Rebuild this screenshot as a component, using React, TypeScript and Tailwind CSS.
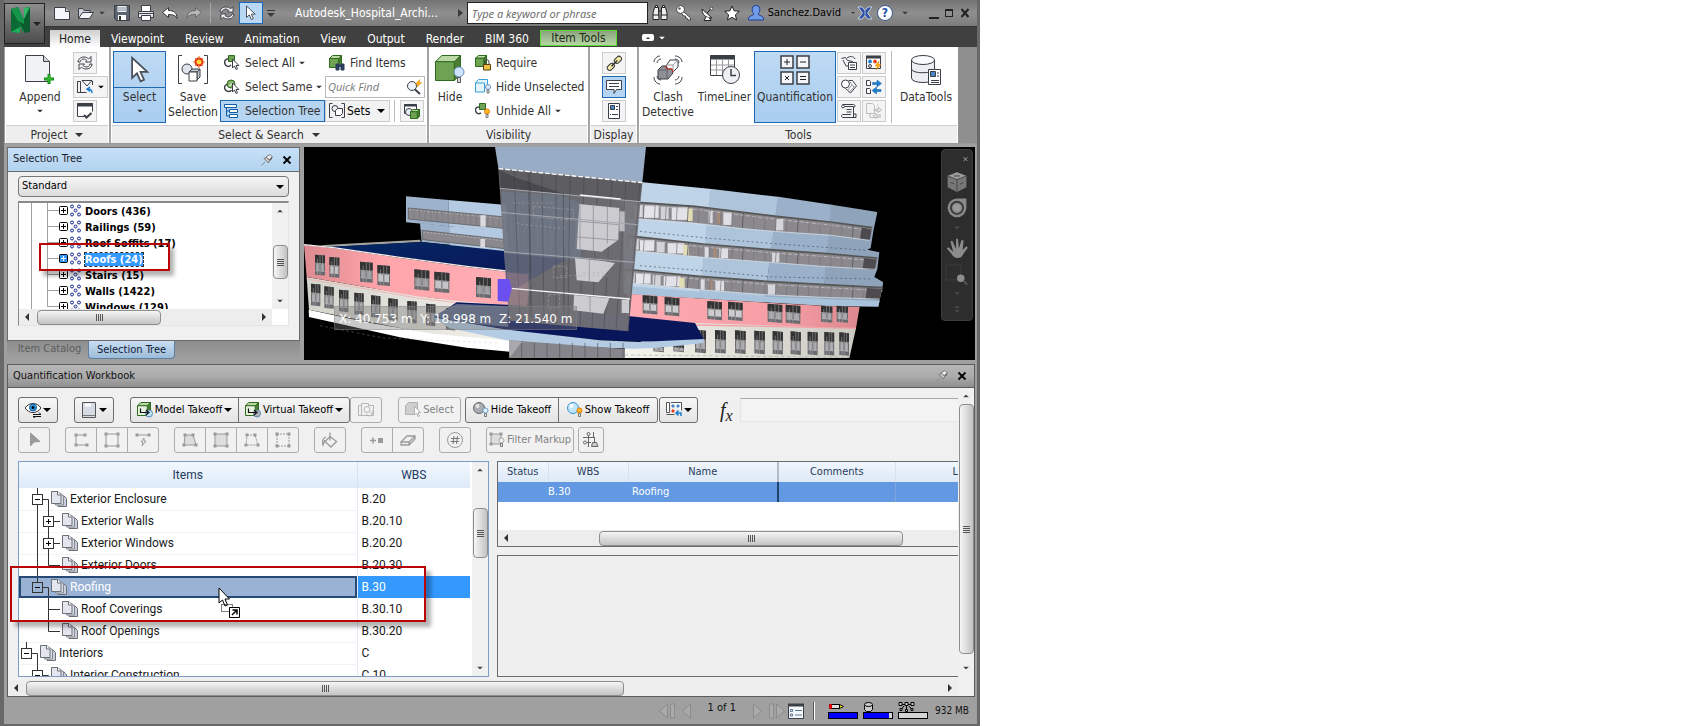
import type { ReactNode } from "react";

const ink = "#3b3f47";

/* ---------- shared bits ---------- */

function Caret({ className = "" }: { className?: string }) {
  return (
    <svg viewBox="0 0 8 4" className={`h-1 w-2 shrink-0 ${className}`}>
      <path d="M0 0h8L4 4z" fill="currentColor" />
    </svg>
  );
}

function Icon({
  size = "h-4 w-4",
  box = "0 0 16 16",
  children,
}: {
  size?: string;
  box?: string;
  children: ReactNode;
}) {
  return (
    <svg
      viewBox={box}
      className={`shrink-0 ${size}`}
      fill="none"
      stroke={ink}
      strokeWidth="1"
    >
      {children}
    </svg>
  );
}

function VScroll({ top, thumb }: { top: string; thumb: string }) {
  return (
    <div className="flex w-4 shrink-0 flex-col items-center bg-[#f0f0f0] py-1.5 text-[#444]">
      <Caret className="scale-75 rotate-180" />
      <div className={`w-full ${top}`} />
      <div
        className={`flex w-[15px] flex-col items-center justify-center gap-px rounded-sm border border-[#8e8e8e] bg-gradient-to-r from-[#f6f6f6] via-[#dcdcdc] to-[#c2c2c4] ${thumb}`}
      >
        {[0, 1, 2, 3].map((i) => (
          <span key={i} className="h-px w-[7px] bg-[#555]" />
        ))}
      </div>
      <div className="flex-1" />
      <Caret className="scale-75" />
    </div>
  );
}

function HScroll({
  left,
  thumb,
  end = true,
}: {
  left: string;
  thumb: string;
  end?: boolean;
}) {
  return (
    <div className="flex h-4 shrink-0 items-center bg-[#ededed] text-[#333]">
      <svg viewBox="0 0 4 8" className="mx-1.5 h-2 w-1 shrink-0">
        <path d="M4 0v8L0 4z" fill="currentColor" />
      </svg>
      <div className={`shrink-0 ${left}`} />
      <div
        className={`flex h-[15px] items-center justify-center gap-px rounded-sm border border-[#8e8e8e] bg-gradient-to-b from-[#f6f6f6] via-[#dcdcdc] to-[#c4c4c6] ${thumb}`}
      >
        {[0, 1, 2, 3].map((i) => (
          <span key={i} className="h-[7px] w-px bg-[#555]" />
        ))}
      </div>
      <div className="flex-1" />
      {end && (
        <svg viewBox="0 0 4 8" className="mx-1.5 h-2 w-1 shrink-0">
          <path d="M0 0v8l4-4z" fill="currentColor" />
        </svg>
      )}
    </div>
  );
}

function PinClose() {
  return (
    <div className="flex items-center gap-2">
      <button aria-label="Pin" className="h-3 w-3">
        <Icon size="h-3 w-3" box="0 0 12 12">
          <path d="M.5 11.500L4 8" stroke="#888" />
          <path d="M3 4.500l4.500 4.500 1-2.500-3-3z" stroke="#777" fill="#ccc" />
          <path d="M5 3l4-2.500 2.500 2.500L9 6.500z" stroke="#777" fill="#efefef" />
          <path d="M8 5.500l3-3v2.500L9 6.500z" fill="#666" stroke="none" />
        </Icon>
      </button>
      <button aria-label="Close" className="h-3 w-3">
        <svg viewBox="0 0 12 12" className="h-3 w-3">
          <path d="M2.500 2.500l7 7M9.500 2.500l-7 7" stroke="#000" strokeWidth="1.800" />
        </svg>
      </button>
    </div>
  );
}

/* ---------- icon drawings ---------- */

const arrowPath = "M2 1v11.500l2.800-2.600 2 4.600 2-.9-2-4.500h3.900z";

function CursorIcon({ size = "h-4 w-4" }: { size?: string }) {
  return (
    <svg viewBox="0 0 13 16" className={`shrink-0 ${size}`}>
      <path d={arrowPath} fill="#fff" stroke="#4a4f58" />
    </svg>
  );
}

function Cube({ x = 0, y = 0, s = 12, c = "#6fa353", l = "#b9d8a4", o = "#2e6b1e" }) {
  const d = s * 0.25;
  return (
    <g stroke={o} strokeLinejoin="round">
      <path d={`M${x} ${y + d}l${d} ${-d}h${s - d}l${-d} ${d}z`} fill={l} />
      <path d={`M${x + s - d} ${y + d}l${d} ${-d}v${s - d}l${-d} ${d}z`} fill="#4b7d35" />
      <path d={`M${x} ${y + d}h${s - d}v${s - d}h${-(s - d)}z`} fill={c} />
    </g>
  );
}

function Bulb({ x, y, c = "#ffb629", o = "#e07b00" }: { x: number; y: number; c?: string; o?: string }) {
  return (
    <g>
      <circle cx={x} cy={y} r="2.500" fill={c} stroke={o} />
      <path d={`M${x - 1} ${y + 3}h2v3h-2z`} fill="#eee" stroke="#777" />
    </g>
  );
}

function RefreshIcon({ c = ink }: { c?: string }) {
  return (
    <Icon>
      <path
        d="M1 7c0-3 3-5 6-5 2 0 3.500.8 4.500 2L14 1.500V7H8.500L10 5.500C9 4.500 8 4 7 4 5 4 3.500 5 3 7z"
        fill="#fff"
        stroke={c}
      />
      <path
        d="M15 9c0 3-3 5-6 5-2 0-3.500-.8-4.500-2L2 14.500V9h5.500L6 10.500c1 1 2 1.500 3 1.500 2 0 3.500-1 4-3z"
        fill="#fff"
        stroke={c}
      />
    </Icon>
  );
}

function PagesIcon() {
  return (
    <svg viewBox="0 0 16 16" className="h-4 w-4 shrink-0">
      <path d="M9 4.500h3.500l3 3v8H7V12z" fill="#c9cedb" stroke="#6c7078" />
      <path d="M6.500 2.500h3.500l2.500 2.500v9H4.500V11z" fill="#d8dce6" stroke="#85898f" />
      <path d="M.5.500h6.500l3 3v9H.5z" fill="#e3e6ee" stroke="#6c7078" />
      <path d="M6.500.500v3.500H10" fill="#fff" stroke="#6c7078" />
    </svg>
  );
}

/* ---------- title bar ---------- */

function TitleBar() {
  return (
    <div className="flex h-[26px] items-center bg-gradient-to-b from-[#737373] via-[#8f8f8f] to-[#7b7b7b] pl-[46px] text-[#3a3a3a]">
      <div className="flex items-center gap-2 pl-1">
        <button aria-label="New">
          <Icon>
            <path d="M.5 2.500h11l4 4v8H.5z" fill="#f6f7fa" />
            <path d="M11.500 2.500v4h4" fill="#cfd5df" />
          </Icon>
        </button>
        <button aria-label="Open">
          <Icon>
            <path d="M.5 13.500v-10h4l1.500 2h6v2" fill="#cfd4dc" />
            <path d="M.5 13.500l4-6h11l-4 6z" fill="#f2f4f7" />
          </Icon>
        </button>
        <Caret className="-mx-1 scale-75" />
        <button aria-label="Save" className="ml-1">
          <Icon>
            <path d="M.5.500h15v15H2.500l-2-2z" fill="#5b6370" />
            <path d="M3.500 1h9v6h-9z" fill="#e9edf3" stroke="none" />
            <path d="M4 3h8M4 5h8" stroke="#8a93a0" />
            <path d="M4 10h8v5H4z" fill="#fff" stroke="none" />
            <path d="M6 11v4" stroke="#333" strokeWidth="2" />
          </Icon>
        </button>
        <button aria-label="Print">
          <Icon>
            <path d="M3.500 6V.500h9V6" fill="#fff" />
            <path d="M.5 6.500h15v6H.5z" fill="#e1e4ea" />
            <path d="M1 8.500h14" stroke="#444" />
            <path d="M3.500 10.500h9v5h-9z" fill="#fff" />
          </Icon>
        </button>
        <button aria-label="Undo">
          <Icon>
            <path
              d="M.5 7.500l6-5v3c5 0 8.500 2 8.500 8-1-2.500-3.500-4-8.500-4v3z"
              fill="#fff"
              stroke="#333"
            />
          </Icon>
        </button>
        <button aria-label="Redo">
          <Icon>
            <path
              d="M15.500 7.500l-6-5v3c-5 0-8.500 2-8.500 8 1-2.500 3.500-4 8.500-4v3z"
              fill="#b5b5b5"
              stroke="#666"
            />
          </Icon>
        </button>
        <span className="h-5 w-px bg-[#a8a8a8]" />
        <button aria-label="Refresh">
          <RefreshIcon />
        </button>
      </div>
      <button
        aria-label="Select"
        className="ml-1 flex h-[22px] w-6 items-center justify-center border border-[#1a66b8] bg-[#b9d8f3]"
      >
        <CursorIcon />
      </button>
      <button aria-label="Customize" className="ml-1 flex w-2 flex-col items-center gap-0.5">
        <span className="h-px w-2 bg-[#333]" />
        <Caret />
      </button>
      <span className="ml-5 min-w-0 flex-1 truncate text-[12px] text-white">
        Autodesk_Hospital_Archi...
      </span>
      <svg viewBox="0 0 5 8" className="mr-1 h-2 w-[5px] shrink-0">
        <path d="M0 0v8l5-4z" fill="#3a3a3a" />
      </svg>
      <input
        type="text"
        aria-label="Search help"
        placeholder="Type a keyword or phrase"
        className="h-[22px] w-[181px] border border-[#222] bg-white px-1 font-['Open_Sans',sans-serif] text-[11px] italic placeholder:text-[#666]"
      />
      <div className="ml-1 flex items-center gap-2">
        <button aria-label="Search">
          <Icon>
            <path d="M2.500 2.500h4v3l.5 9h-6V8zM9.500 2.500h4L15 8v6.500H9l.5-9z" fill="#eee" stroke="#222" />
            <path d="M1 10h6M9 10h6M6.500 6h3M3.500.500h2v2h-2zM10.500.500h2v2h-2z" fill="#eee" stroke="#222" />
          </Icon>
        </button>
        <button aria-label="Subscription">
          <Icon>
            <path d="M7.500 6.500l7 6.500v2h-2.500l-1-2h-1.500v-2h-1.500l-3-3z" fill="#fff" stroke="#444" />
            <circle cx="4.500" cy="4.500" r="4" fill="#fff" stroke="#444" />
            <circle cx="3.500" cy="3.500" r="1.200" fill="#555" stroke="none" />
          </Icon>
        </button>
        <button aria-label="Communication">
          <Icon>
            <path d="M2 4c0 6 4 9 10 9z" fill="#fff" stroke="#222" />
            <path d="M7 8l4-4M6 12l-2 3.500h7L9 12.500" fill="#fff" stroke="#222" />
            <circle cx="11.500" cy="3.500" r="1.500" fill="#fff" />
          </Icon>
        </button>
        <button aria-label="Favorites">
          <Icon>
            <path
              d="M8 1l2.100 4.800 5.200.500-3.900 3.500 1.100 5.200L8 12.300 3.500 15l1.100-5.200L.7 6.300l5.200-.500z"
              fill="#fff"
              stroke="#222"
            />
          </Icon>
        </button>
        <button className="flex items-center gap-1 text-[11px] text-black">
          <Icon>
            <path
              d="M8 .500c3 0 4 2 3.800 4.500-.1 2-.8 3-1.800 4 0 1.500 5.500 1.500 5.500 4.500v1.500H.5V13.500c0-3 5.500-3 5.500-4.500-1-1-1.700-2-1.800-4C4 2.500 5 .500 8 .500z"
              fill="#6f9be8"
              stroke="#1f3f8f"
            />
          </Icon>
          Sanchez.David
        </button>
      </div>
      <div className="ml-2 flex items-center gap-1">
        <Caret className="scale-50" />
        <Icon size="-ml-1 h-4 w-4">
          <path d="M1 2h4l3 3.500L11 2h4l-4.500 6 4.500 6h-4l-3-3.500L5 14H1l4.500-6z" fill="#2c4fa3" stroke="#dfe6f5" strokeWidth=".8" />
          <path d="M8 5.500v5" stroke="#9fb6e4" />
        </Icon>
        <button
          aria-label="Help"
          className="flex h-4 w-4 items-center justify-center rounded-full border border-[#3c5a90] bg-white text-[12px] leading-none font-bold text-[#1f4fae]"
        >
          ?
        </button>
        <Caret className="ml-1 scale-75" />
      </div>
      <div className="mr-1.5 ml-5 flex items-center gap-1.5">
        <button aria-label="Minimize" className="flex h-3 w-2.5 items-end">
          <span className="h-0.5 w-2.5 bg-[#222]" />
        </button>
        <button aria-label="Maximize" className="h-2 w-2 border border-t-2 border-[#222]" />
        <button aria-label="Close window" className="h-3 w-3">
          <svg viewBox="0 0 12 12" className="h-3 w-3">
            <path d="M2.500 2l7 8M9.500 2l-7 8" stroke="#222" strokeWidth="2" />
          </svg>
        </button>
      </div>
    </div>
  );
}

const tabs = [
  "Home",
  "Viewpoint",
  "Review",
  "Animation",
  "View",
  "Output",
  "Render",
  "BIM 360",
];

function TabBar() {
  return (
    <div className="flex h-5 items-end gap-px bg-[#404040] pl-[46px] text-[12px] text-white">
      {tabs.map((t, i) => (
        <button
          key={t}
          className={
            i === 0
              ? "h-[17px] bg-gradient-to-b from-[#cfcfcf] to-white px-[9px] leading-4 text-[#222]"
              : "h-[17px] px-2.5 leading-4"
          }
        >
          {t}
        </button>
      ))}
      <button className="mb-px h-4 w-[77px] border border-[#5ddb2e] bg-gradient-to-b from-[#8ba37e] to-[#b7d6a6] leading-[14px] text-[#1d2b17]">
        Item Tools
      </button>
      <button aria-label="Ribbon display" className="mb-1.5 ml-6 flex items-center gap-1">
        <span className="flex h-[7px] w-3 items-center justify-center rounded-[2px] bg-white text-[#333]">
          <Caret className="scale-50 rotate-180" />
        </span>
        <Caret className="scale-75" />
      </button>
    </div>
  );
}

/* ---------- ribbon ---------- */

function Group({
  title,
  width,
  caret,
  children,
}: {
  title: string;
  width: string;
  caret?: boolean;
  children: ReactNode;
}) {
  return (
    <section className={`flex flex-col border-r-2 border-[#a4a4a4] bg-white ${width}`}>
      <div className="flex h-[78px] items-start pt-1">{children}</div>
      <h2 className="mx-px flex h-[18px] items-center justify-center gap-2 border-t border-[#cfcfcf] bg-[#eeeeee] text-[12px] text-[#333]">
        {title}
        {caret && <Caret />}
      </h2>
    </section>
  );
}

function BigButton({
  label,
  icon,
  width,
  caret,
  active,
}: {
  label: string;
  icon: ReactNode;
  width: string;
  caret?: boolean;
  active?: boolean;
}) {
  return (
    <button
      className={`flex h-[72px] shrink-0 flex-col items-center border text-[12px] leading-[15px] text-[#333] ${width} ${
        active ? "border-[#1f68b5] bg-gradient-to-b from-[#bedaf4] to-[#a9cdef]" : "border-transparent"
      }`}
    >
      <span className="flex h-9 items-center justify-center">{icon}</span>
      <span className="pt-0.5">{label}</span>
      {caret && <Caret className="mt-1 scale-75" />}
    </button>
  );
}

function SmallIcon({
  label,
  active,
  caret,
  children,
}: {
  label: string;
  active?: boolean;
  caret?: boolean;
  children: ReactNode;
}) {
  return (
    <button
      aria-label={label}
      className={`flex h-[22px] items-center justify-center border ${caret ? "w-[35px] gap-1" : "w-6"} ${
        active ? "border-[#1f68b5] bg-[#b5d5f2]" : "border-[#cccccc] bg-[#f4f4f4]"
      }`}
    >
      {children}
      {caret && <Caret className="scale-75" />}
    </button>
  );
}

function RowButton({
  label,
  icon,
  caret,
  active,
}: {
  label: string;
  icon: ReactNode;
  caret?: boolean;
  active?: boolean;
}) {
  return (
    <button
      className={`flex h-[22px] w-full items-center gap-[5px] border px-[3px] text-[12px] whitespace-nowrap text-[#333] ${
        active ? "border-[#1f68b5] bg-[#b5d5f2]" : "border-transparent"
      }`}
    >
      {icon}
      {label}
      {caret && <Caret className="-ml-0.5 scale-75" />}
    </button>
  );
}

function Ribbon() {
  return (
    <div className="ml-px flex h-[97px] border-b border-[#9a9a9a] bg-gradient-to-r from-[#b4b4b4] to-[#8f8f8f]">
      <Group title="Project" width="w-[106px]" caret>
        <BigButton
          label="Append"
          width="ml-1.5 w-[58px]"
          caret
          icon={
            <Icon size="h-[30px] w-[30px]" box="0 0 30 30">
              <path d="M.5.500h18l6 6v20H.5z" fill="#f1f2f6" />
              <path d="M18.500.500v6h6" fill="#cdd2dc" />
              <path d="M24 19v10M19 24h10" stroke="#0d8a0d" strokeWidth="3" />
              <path d="M24 20v8M20 24h8" stroke="#42c842" strokeWidth="1" />
            </Icon>
          }
        />
        <div className="ml-1 flex flex-col gap-0.5 pt-px">
          <SmallIcon label="Refresh">
            <RefreshIcon />
          </SmallIcon>
          <SmallIcon label="Reset" caret>
            <Icon>
              <path d="M.5 2.500h3v11h-3zM.5 13.500h9M5 1.500h10L10 7zM15.500 2v4" />
              <path d="M15 14c0-3-1-4-4-4M13 8l-3 2 3 2.500" stroke="#1a7fd0" strokeWidth="1.500" />
            </Icon>
          </SmallIcon>
          <SmallIcon label="File options">
            <Icon>
              <path d="M7 13.500H.5V.500h15v8" fill="#fff" />
              <path d="M0 2h16" strokeWidth="3" />
              <path d="M7 12l2.500 2.500 5-4.500" strokeWidth="2" />
            </Icon>
          </SmallIcon>
        </div>
      </Group>

      <Group title="Select & Search" width="w-[318px]" caret>
        <div className="relative ml-0.5">
          <BigButton
            label="Select"
            width="w-[53px]"
            caret
            active
            icon={<CursorIcon size="h-7 w-6" />}
          />
          <span className="absolute inset-x-0 top-9 h-px bg-[#1f68b5]" />
        </div>
        <BigButton
          label="Save Selection"
          width="w-[54px]"
          icon={
            <Icon size="h-[30px] w-[32px]" box="0 0 32 30">
              <path d="M5 .500H1.500v28H5M27 .500h3.500v28H27" />
              <circle cx="10" cy="14" r="5" fill="#dfe3ea" />
              <path d="M12 17l3-3h8l-3 3zM20 17l3-3v8l-3 3z" fill="#c4c9d2" />
              <path d="M12 17h8v9h-8z" fill="#fff" />
              <circle cx="22" cy="7" r="3.500" fill="#ffd93b" stroke="#e2231a" strokeWidth="2" />
              <path d="M22 1v3M22 10v3M16 7h3M25 7h3M18 3l1.500 1.500M26 3l-1.500 1.500M18 11l1.500-1.500M26 11l-1.500-1.500" stroke="#f07c12" />
            </Icon>
          }
        />
        <div className="flex w-[105px] flex-col gap-0.5 pt-px">
          <RowButton
            label="Select All"
            caret
            icon={
              <Icon>
                <path d="M5 3.500C1 4 0 6 1 9s4 3 6 1" strokeWidth="1.500" />
                <path d="M4.500.500h6v6h-6z" fill="#6fa353" stroke="#2e6b1e" />
                <path d="M8.500 4v9l2-2 1.500 3.500 1.500-.7L12 10.500h3z" fill="#fff" />
              </Icon>
            }
          />
          <RowButton
            label="Select Same"
            caret
            icon={
              <Icon>
                <path d="M4 5C0 6 0 9 1.500 11s5 2 6 0" strokeWidth="1.500" />
                <circle cx="7" cy="5" r="4" fill="#86b56c" stroke="#2e6b1e" />
                <path d="M5 7l4-3" stroke="#fff" />
                <path d="M8.500 4v9l2-2 1.500 3.500 1.500-.7L12 10.500h3z" fill="#fff" />
              </Icon>
            }
          />
          <RowButton
            label="Selection Tree"
            active
            icon={
              <Icon>
                <path d="M.5 1.500h12v3H.5zM5.500 6.500h8v3h-8zM5.500 11.500h8v3h-8z" fill="#fff" stroke="#0d5ca8" />
                <path d="M2.500 5v8H5M2.500 8H5" stroke="#0d5ca8" />
              </Icon>
            }
          />
        </div>
        <div className="flex w-[101px] flex-col gap-0.5 pt-px">
          <RowButton
            label="Find Items"
            icon={
              <Icon>
                <Cube x={0.5} y={0.5} s={12} />
                <path d="M7 15V9h3v6zM12 15V9h3v6z" fill="#2b3d5c" stroke="#2b3d5c" />
                <path d="M10 11h2" stroke="#2b3d5c" strokeWidth="2" />
              </Icon>
            }
          />
          <label className="flex h-[22px] w-[100px] items-center border border-[#b9b9b9] bg-white px-0.5">
            <input
              type="text"
              aria-label="Quick Find"
              placeholder="Quick Find"
              className="w-full min-w-0 font-['Open_Sans',sans-serif] text-[11px] italic placeholder:text-[#777]"
            />
            <Icon>
              <circle cx="6" cy="7" r="4.500" fill="#eef4fa" />
              <path d="M9 10.500l5 4.500" strokeWidth="2" />
              <path d="M14 .500L9.500 5H12l-1 3 4.500-4.500H13z" fill="#ffb000" stroke="#e07b00" strokeWidth=".5" />
            </Icon>
          </label>
          <div className="flex items-center">
            <label className="relative flex h-[22px] w-[65px] items-center border border-[#cccccc] bg-[#f2f2f2] pl-[3px]">
              <Icon>
                <path d="M3.500.500h-3v14h3M12.500.500h3v14h-3" />
                <circle cx="6" cy="5.500" r="3" fill="#eee" />
                <path d="M6.500 7.500l2-2h5v5l-2 2h-5z" fill="#fff" />
              </Icon>
              <select
                aria-label="Sets"
                className="h-full w-full appearance-none bg-transparent pl-0.5 text-[12px] text-black outline-none"
              >
                <option>Sets</option>
              </select>
              <Caret className="pointer-events-none absolute right-1" />
            </label>
            <span className="ml-1 h-[22px] w-px bg-[#bbb]" />
            <div className="ml-[5px]">
              <SmallIcon label="Selection inspector">
                <Icon>
                  <path d="M.5 1.500h12v9H.5z" fill="#fff" />
                  <path d="M0 2.500h13" strokeWidth="2" />
                  <circle cx="5" cy="9" r="3.500" fill="#e8eef5" />
                  <Cube x={6.5} y={6.5} s={9} />
                </Icon>
              </SmallIcon>
            </div>
          </div>
        </div>
      </Group>

      <Group title="Visibility" width="w-[161px]">
        <BigButton
          label="Hide"
          width="w-[42px]"
          icon={
            <Icon size="h-[30px] w-[30px]" box="0 0 30 30">
              <Cube x={0.5} y={0.5} s={25} />
              <circle cx="24" cy="17" r="5" fill="#cfe3ff" stroke="#6a8fc0" />
              <path d="M22.500 22.500h3v5h-3z" fill="#ddd" stroke="#555" />
            </Icon>
          }
        />
        <div className="flex w-[115px] flex-col gap-0.5 pt-px">
          <RowButton
            label="Require"
            icon={
              <Icon>
                <Cube x={0.5} y={0.5} s={11} />
                <path d="M10 9V7c0-3 4-3 4 0v2" />
                <path d="M8.500 9.500h7v5.500h-7z" fill="#f0c04a" stroke="#5a4300" />
              </Icon>
            }
          />
          <RowButton
            label="Hide Unselected"
            icon={
              <Icon>
                <path d="M.5 4l3-3.500h9v7M.5 4h9v9h-9z" fill="#e5f4fd" stroke="#3aa0d8" />
                <Bulb x={13} y={8} c="#dcebff" o="#6a8fc0" />
              </Icon>
            }
          />
          <RowButton
            label="Unhide All"
            caret
            icon={
              <Icon>
                <path d="M4 4C0 4 0 7 1 9s3 2 5 1" strokeWidth="1.500" />
                <path d="M4.500.500h6v6h-6z" fill="#6fa353" stroke="#2e6b1e" />
                <Bulb x={12} y={8.500} />
              </Icon>
            }
          />
        </div>
      </Group>

      <Group title="Display" width="w-[49px]">
        <div className="mx-auto flex flex-col gap-0.5 pt-px">
          <SmallIcon label="Links">
            <Icon>
              <g transform="rotate(-45 8 8)" fill="#f5e9a8" stroke="#333">
                <rect x="-1" y="6" width="8" height="5" rx="2.500" />
                <rect x="9" y="6" width="8" height="5" rx="2.500" />
                <path d="M4 8.500h8" strokeWidth="1.500" />
              </g>
            </Icon>
          </SmallIcon>
          <SmallIcon label="Quick properties" active>
            <Icon>
              <path d="M.5 1.500h15v9h-5l-2.500 4v-4H.5z" fill="#fff" />
              <path d="M3 4.500h10M3 7.500h10" />
            </Icon>
          </SmallIcon>
          <SmallIcon label="Properties">
            <Icon>
              <path d="M2.500.500h11v15h-11z" fill="#fff" />
              <path d="M4.500 2.500h4v4h-4z" fill="#4a86c5" />
              <path d="M10 3.500h2M10 6.500h2M6 11.500h6M4 11.500h1" />
            </Icon>
          </SmallIcon>
        </div>
      </Group>

      <section className="flex flex-1 flex-col bg-white">
        <div className="flex h-[78px] items-start pt-1">
          <BigButton
            label="Clash Detective"
            width="w-[58px]"
            icon={
              <Icon size="h-[30px] w-[30px]" box="0 0 30 30">
                <path d="M1 7c0-3 3-6 6-6M4 8c0-2 2-4 4-4M22 1c4 0 7 3 7 6M22 4c2 0 4 2 4 4M1 22c0 4 3 7 6 7M4 21c0 2 2 4 4 4M29 22c0 4-3 7-7 7M26 21c0 2-2 4-4 4" />
                <path d="M13 11l4-6h8v7l-5 5h-3z" fill="#fafafa" />
                <path d="M20 10h-7M20 10v7M20 10l5-5" stroke="#9a9ea6" />
                <path d="M5 15l4-4h4l1 3h5l1 4-5 6H5z" fill="#8d9096" />
                <path d="M5 15h9M14 15v9" stroke="#5f636b" />
                <path d="M12 11l2 3h5l1 3" stroke="#e0281a" />
              </Icon>
            }
          />
          <BigButton
            label="TimeLiner"
            width="w-[55px]"
            icon={
              <Icon size="h-[30px] w-[30px]" box="0 0 30 30">
                <path d="M.5.500h24v20H.5z" fill="#fff" />
                <path d="M0 2.500h25" strokeWidth="4" />
                <path d="M1 10h23M1 15h23M6.500 5v15M12.500 5v15M18.500 5v15" stroke="#999" />
                <circle cx="21" cy="20" r="8.500" fill="#eef0f4" />
                <path d="M21 14v6.500h5" strokeWidth="1.500" />
              </Icon>
            }
          />
          <BigButton
            label="Quantification"
            width="ml-0.5 w-[82px]"
            active
            icon={
              <Icon size="h-[30px] w-[30px]" box="0 0 30 30">
                <path d="M1 1h12v12H1zM17 1h12v12H17zM1 17h12v12H1zM17 17h12v12H17z" fill="#f4f5f8" strokeWidth="1.500" />
                <path d="M7 4v6M4 7h6M20 7h6M5 21l4 4M9 21l-4 4M20 21.500h6M20 24.500h6" stroke="#222" />
              </Icon>
            }
          />
          <div className="ml-px grid grid-cols-2 gap-x-px gap-y-0.5 pt-px">
            <SmallIcon label="Presenter">
              <Icon>
                <path d="M.5 3.500l4-1 2 3 5 1 1 3M2 5l3 6h3M6 3c2-2 7-2 8 1" />
                <path d="M7.500 7.500h8v7h-8z" fill="#fff" />
                <path d="M9 10h5M9 12.500h5" />
              </Icon>
            </SmallIcon>
            <SmallIcon label="Animator">
              <Icon>
                <path d="M.5 1.500h14v12H.5z" fill="#fff" />
                <path d="M0 2h15" strokeWidth="3" />
                <circle cx="4" cy="6.500" r="1.500" fill="#1a7fd0" stroke="#1a7fd0" />
                <circle cx="9" cy="6.500" r="1.500" fill="#e2421a" stroke="#e2421a" />
                <circle cx="4" cy="11" r="1.500" fill="#f0f0f0" />
                <path d="M13 6l-4 5h2.500L10 15l5-5.500h-2.500z" fill="#ffb000" stroke="#e07b00" strokeWidth=".5" />
              </Icon>
            </SmallIcon>
            <SmallIcon label="Scripter">
              <Icon>
                <path d="M8 1.500h3.500l4 5.500-6 7-5-4.500z" fill="#fff" />
                <circle cx="4.500" cy="5" r="4" fill="#fff" />
                <path d="M6 12l5-6M8 13.500l5.500-6M9 3l4 5" stroke="#8b8f97" />
              </Icon>
            </SmallIcon>
            <SmallIcon label="Compare">
              <Icon>
                <path d="M.5 1.500h3l1 1v4h-4zM.5 9.500h3l1 1v4h-4z" fill="#fff" />
                <path d="M6.500 3.500H11V1l4.500 3.500L11 8V5.500H6.500zM15 10.500h-4.500V8L6 11.500l4.500 3.500v-2.500H15z" fill="#1a7fd0" stroke="#0d5ca8" strokeWidth=".5" />
              </Icon>
            </SmallIcon>
            <SmallIcon label="Batch utility">
              <Icon>
                <path d="M3.500 3.500h9v11h-9M1.500 1.500h11c2 0 2 3 0 3M3.500 3.500c0-2-3-2-3 0s3 1 3 1M12.500 11h2.500v3.500H2c-2 0-2-3 0-3h8" />
                <path d="M5.500 6.500h5M5.500 9h5" />
              </Icon>
            </SmallIcon>
            <SmallIcon label="App manager">
              <Icon>
                <g stroke="#bdbdbd">
                  <path d="M.5.500h6l2 2v8h-8zM4 10.500v4h8v-2M12 3V1.500" />
                  <path d="M8 6.500h4V4l3.500 3L12 9.500V8H8zM15 12h-5v-1.500L7 13l3 2.500V14h5" fill="#e4e4e4" />
                </g>
              </Icon>
            </SmallIcon>
          </div>
          <span className="ml-[5px] h-[72px] w-px bg-[#bbb]" />
          <BigButton
            label="DataTools"
            width="ml-0.5 w-16"
            icon={
              <Icon size="h-[30px] w-[30px]" box="0 0 30 30">
                <path d="M.5 5v18c0 6 23 6 23 0V5" fill="#eceef2" />
                <path d="M.5 14c0 5 23 5 23 0" />
                <ellipse cx="12" cy="5" rx="11.500" ry="4.500" fill="#fafbfc" />
                <path d="M17.500 14.500h12v15h-12z" fill="#fff" />
                <path d="M19.500 16.500h5v5h-5z" fill="#4a86c5" />
                <path d="M26 18h2M26 21h2M20 25.500h8M20 27.500h8" />
              </Icon>
            }
          />
        </div>
        <h2 className="mx-px flex h-[18px] items-center justify-center border-t border-[#cfcfcf] bg-[#eeeeee] text-[12px] text-[#333]">
          Tools
        </h2>
      </section>
      <div className="w-[19px] shrink-0" />
    </div>
  );
}

/* ---------- selection tree panel ---------- */

const categories = [
  "Doors (436)",
  "Railings (59)",
  "Roof Soffits (17)",
  "Roofs (24)",
  "Stairs (15)",
  "Walls (1422)",
  "Windows (129)",
];

function SelectionTree() {
  return (
    <section className="relative flex w-[293px] shrink-0 flex-col">
      <div className="border border-[#6a6a6a] bg-[#f0f0f0]">
        <header className="flex h-6 items-center justify-between border-b border-[#6a6a6a] bg-gradient-to-b from-[#c6e0f8] to-[#b3d3ef] pr-1.5 pl-[5px]">
          <h3 className="text-[11px] text-[#1a1a2a]">Selection Tree</h3>
          <PinClose />
        </header>
        <div className="flex flex-col gap-1 px-2.5 pt-1 pb-3.5">
          <label className="relative flex h-[21px] items-center rounded-sm border border-[#777] bg-gradient-to-b from-[#f5f5f5] to-[#dcdcdc]">
            <select
              aria-label="Tree view"
              className="h-full w-full appearance-none bg-transparent pl-[3px] text-[11px] text-black outline-none"
            >
              <option>Standard</option>
            </select>
            <Caret className="pointer-events-none absolute right-1" />
          </label>
          <div className="border border-t-2 border-[#8a8a8a] border-r-[#e5e5e5] border-b-[#e5e5e5] bg-white">
            <div className="flex h-[106px]">
              <ul className="h-full flex-1 overflow-hidden">
                {categories.map((c, i) => (
                  <li key={c} className="flex h-4 items-center">
                    <svg viewBox="0 0 66 16" className="h-4 w-[66px] shrink-0">
                      <path
                        d={i < 6 ? "M12.500 0v16M28.500 0v16M29 7.500h12" : "M12.500 0v16M28.500 0v8M29 7.500h12"}
                        stroke="#a0a0a0"
                        fill="none"
                      />
                      <rect x="40.500" y="3.500" width="8" height="8" rx="1" fill={i === 3 ? "#3399ff" : "#fff"} stroke="#000" />
                      <path d="M42 7.500h5M44.500 5v5" stroke={i === 3 ? "#fff" : "#000"} />
                      <g fill="#e4e8ff" stroke="#1f2f8f">
                        <circle cx="53" cy="3.500" r="1.500" />
                        <circle cx="60" cy="3.500" r="1.500" />
                        <circle cx="56.500" cy="7.500" r="1.500" />
                        <circle cx="53" cy="11.500" r="1.500" />
                        <circle cx="60" cy="11.500" r="1.500" />
                      </g>
                    </svg>
                    <span
                      className={`text-[11px] leading-[13px] font-bold whitespace-nowrap ${
                        i === 3 ? "bg-[#3399ff] text-white outline outline-dashed outline-[#333]" : "text-black"
                      }`}
                    >
                      {c}
                    </span>
                  </li>
                ))}
              </ul>
              <VScroll top="h-8" thumb="h-[34px]" />
            </div>
            <div className="pr-4">
              <HScroll left="w-0.5" thumb="w-[124px]" />
            </div>
          </div>
        </div>
      </div>
      <div className="flex h-[19px] items-start bg-gradient-to-b from-[#8d8d8d] to-[#a0a0a0] text-[11px] leading-4">
        <button className="w-[81px] pl-1 text-[#5c5c5c]">Item Catalog</button>
        <button className="h-[18px] w-[87px] rounded-b border border-t-0 border-[#5f7f9f] bg-gradient-to-b from-[#c9def2] to-[#9dbcd8] text-[#10203a]">
          Selection Tree
        </button>
      </div>
      <div className="pointer-events-none absolute top-24 left-8 h-7 w-[131px] border-2 border-[#b90504] shadow-[4px_5px_4px_rgba(0,0,0,0.3)]" />
    </section>
  );
}

/* ---------- 3D view ---------- */

type Pt = [number, number];

function at(line: Pt[], x: number) {
  for (let i = 1; i < line.length; i++) {
    const [x0, y0] = line[i - 1];
    const [x1, y1] = line[i];
    if (x <= x1) return y0 + ((y1 - y0) * (x - x0)) / (x1 - x0);
  }
  return line[line.length - 1][1];
}

function join(a: Pt[], b: Pt[]) {
  return [...a, ...[...b].reverse()].map((p) => p.join(",")).join(" ");
}

const strips: { top: Pt[]; bottom: Pt[] }[] = [
  {
    top: [[-40, 176], [165, 190], [310, 208], [410, 220], [570, 237], [697, 254]],
    bottom: [[-40, 225], [160, 240], [300, 256], [400, 265], [565, 276], [690, 292]],
  },
  {
    top: [[-40, 278], [190, 303], [390, 320], [560, 332], [712, 345]],
    bottom: [[-40, 321], [190, 343], [390, 358], [560, 371], [708, 379]],
  },
  {
    top: [[-50, 378], [180, 400], [380, 415], [555, 425], [728, 434]],
    bottom: [[-50, 418], [180, 440], [375, 455], [550, 463], [718, 468]],
  },
];

const panes = [
  [-20, 28, "#d8d8de"], [12, 44, "#e4e4ea"], [62, 24, "#d2d2d8"], [95, 50, "#e2e2e8"], [142, 16, "#e2dcb4"],
  [206, 12, "#dcdce2"], [232, 10, "#a58a7a"], [250, 26, "#dedee4"], [408, 22, "#d4d4da"],
] as [number, number, string][];

function Window({ x, y, w = 34, h = 60, light = "#a9a9ad" }: { x: number; y: number; w?: number; h?: number; light?: string }) {
  return (
    <g transform={`translate(${x} ${y}) skewY(5)`}>
      <rect width={w} height={h} fill="#6a6a6e" />
      <rect width={w} height={h * 0.4} fill="#333" />
      <rect x="3" y={h * 0.45} width={w / 2 - 5} height={h * 0.36} fill={light} />
      <rect x={w / 2 + 2} y={h * 0.45} width={w / 2 - 5} height={h * 0.36} fill={light} />
      <path
        d={`M${w / 2} 0v${h}M${w / 4} ${h * 0.2}v${h * 0.8}M${w * 0.75} 0v${h * 0.8}M0 ${h * 0.42}h${w}M0 ${h * 0.8}h${w}`}
        stroke="#bbb"
        strokeOpacity=".65"
        strokeWidth="2"
      />
    </g>
  );
}

function Building() {
  return (
    <svg viewBox="12 12 2013 633" preserveAspectRatio="xMinYMin slice" className="block h-[211px] w-full bg-black">
      <defs>
        <linearGradient id="pinkLeft">
          <stop offset="0" stopColor="#dd8b90" />
          <stop offset=".35" stopColor="#ffa5ab" />
          <stop offset="1" stopColor="#ffb0b6" />
        </linearGradient>
        <linearGradient id="pinkRight">
          <stop offset="0" stopColor="#ffacb2" />
          <stop offset=".7" stopColor="#f49ca3" />
          <stop offset="1" stopColor="#dd878e" />
        </linearGradient>
        <linearGradient id="cream">
          <stop offset="0" stopColor="#d4d3cc" />
          <stop offset="1" stopColor="#f3f2ec" />
        </linearGradient>
        <linearGradient id="creamRight">
          <stop offset="0" stopColor="#f4f4ee" />
          <stop offset="1" stopColor="#cbcac2" />
        </linearGradient>
        <linearGradient id="roof" x1="0" y1="0" x2="1" y2="1">
          <stop offset="0" stopColor="#032764" />
          <stop offset="1" stopColor="#0c1658" />
        </linearGradient>
        <clipPath id="upper">
          <path d="M-50 112L8 118 215 138 420 162 580 186 712 207 700 265 692 315 682 320 718 328 712 378 703 402 730 418 715 491 560 488 380 478-50 452z" />
        </clipPath>
      </defs>

      {/* left wing, lower storeys */}
      <path d="M20 402L200 433 400 465 640 485V605L400 575 200 535 27 500z" fill="url(#cream)" />
      <path d="M26 500L200 538 400 572 640 594V627L500 614 300 583 27 522z" fill="#fff" />
      <path d="M12 305L100 315 300 345 500 372 620 386 700 390 680 492 480 475 350 460 200 433 20 402z" fill="url(#pinkLeft)" />
      <path d="M20 408L200 438 350 465 480 480" stroke="#f0b8b8" strokeWidth="3" fill="none" />
      {[[45, 335], [88, 342], [180, 356], [232, 366], [343, 379], [403, 386], [528, 402]].map(([x, y], i) => (
        <Window key={x} x={x} y={y} w={i < 2 ? 30 : i < 4 ? 38 : 45} light={i % 2 ? "#c6c6ca" : "#9c9ca0"} />
      ))}
      {[[33, 422], [73, 430], [117, 440], [163, 449], [213, 457], [265, 466], [322, 474], [378, 482], [438, 495]].map(
        ([x, y]) => (
          <Window key={x} x={x} y={y} w={28} h={65} />
        )
      )}
      <path d="M60 548L250 585 600 600" stroke="#bbb" strokeDasharray="8 8" strokeWidth="1" fill="none" />

      {/* left wing, upper storeys */}
      <path d="M318 160L445 171 445 250 318 238z" fill="#9db3cc" />
      <path d="M445 171L620 186 620 268 445 250z" fill="#b4cae2" />
      <path d="M360 240L450 250 450 305 365 297z" fill="#9db3cc" />
      <path d="M450 250L625 265 625 330 450 308z" fill="#b4cae2" />
      <path d="M325 195L620 222V257L325 228z" fill="#8a888c" stroke="#555" strokeWidth="2" />
      <path d="M366 262L622 290V318L368 290z" fill="#8a888c" stroke="#555" strokeWidth="2" />
      <path d="M328 200L618 227M370 267L618 294" stroke="#ccc" strokeDasharray="5 6" strokeWidth="2" />
      {Array.from({ length: 17 }, (_, i) => 342 + i * 17).map((x) => (
        <path key={x} d={`M${x} ${x * 0.09 + 168}v30`} stroke="#77757a" strokeWidth="2" />
      ))}
      <path d="M541 217h16v34h-16zM541 288h14v26h-14z" fill="#dadade" />
      <path d="M60 307L360 290 362 297 90 312z" fill="#a3a3a0" />
      <path d="M75 312L365 297 620 325 810 345 740 385 620 382 500 369 300 341z" fill="url(#roof)" />
      <path d="M12 305L100 314 300 343 500 370 620 384" stroke="#eee" strokeWidth="4" fill="none" />

      {/* right wing */}
      <g transform="translate(1020 0)">
        <g clipPath="url(#upper)">
          <path d="M-60 90H220L175 500H-60z" fill="#c0d4e8" />
          <path d="M215 90H425L370 500H175z" fill="#aec4da" />
          <path d="M422 90H590L545 500H370z" fill="#9bb1c9" />
          <path d="M582 90H740V500H545z" fill="#8fa4bb" />
          <path d="M-50 428L180 446 380 462 550 468 740 474V500H-50z" fill="#a9c2dc" />
        </g>
        {strips.map((s, i) => (
          <g key={i}>
            <polygon points={join(s.top, s.bottom)} fill="#8b898d" />
            {panes.map(([x, w, c]) => (
              <path
                key={x}
                d={`M${x - i * 12} ${at(s.top, x) + 8}h${w}v${(at(s.bottom, x) - at(s.top, x)) * 0.75}h${-w}z`}
                fill={c}
              />
            ))}
            <polyline points={s.top.join(" ")} fill="none" stroke="#555" strokeWidth="5" />
            <polyline
              points={s.top.map(([x, y]) => [x, y + 9]).join(" ")}
              fill="none"
              stroke="#cfcfd4"
              strokeDasharray="12 6"
              strokeWidth="2"
            />
            {Array.from({ length: 22 }, (_, k) => -20 + k * 33).map((x) => (
              <path
                key={x}
                d={`M${x} ${at(s.top, x)}L${x - 3} ${at(s.bottom, x)}`}
                stroke={x % 5 === 0 ? "#4c4c52" : "#747278"}
                strokeWidth="2"
              />
            ))}
            <path
              d={`M${665 + i * 8} ${at(s.top, 665) + 4}L${695 + i * 15} ${at(s.top, 695) + 6}l-6 32L${660 + i * 8} ${at(s.bottom, 660)}z`}
              fill="#4d4a50"
            />
            <polyline points={s.bottom.join(" ")} fill="none" stroke="#e6ebf2" strokeWidth="2" />
          </g>
        ))}
        <path d="M0 265L200 285 400 302 680 322M0 368L200 384 400 402 700 408" stroke="#46536a" strokeDasharray="6 8" strokeWidth="2" fill="none" />
        <path d="M-40 452L0 455 380 479 560 489 659 491 648 556 165 545-40 528z" fill="url(#pinkRight)" />
        <path d="M-45 612L165 540 648 556 628 645H-45z" fill="url(#creamRight)" />
        <path d="M165 546L648 556" stroke="#f2a3a8" strokeWidth="4" />
        {[[8, 457], [74, 462], [202, 474], [264, 476], [383, 482], [437, 485], [543, 488], [590, 488]].map(([x, y], i) => (
          <Window key={x} x={x} y={y} w={i > 5 ? 34 : 44} h={i > 5 ? 48 : 54} light={i < 4 ? "#cfcfd3" : "#a6a6aa"} />
        ))}
        {[165, 225, 285, 343, 398, 452, 503, 553, 598].map((x, i) => (
          <Window key={x} x={x} y={560 + i} w={33 - i / 2} h={68} />
        ))}
        {[40, 100].map((x) => (
          <Window key={x} x={x} y={605} w={32} h={20} />
        ))}
        <path d="M-45 636L628 643" stroke="#aaa" strokeDasharray="10 8" strokeWidth="2" />
      </g>

      {/* entrance canopy */}
      <path d="M470 478L620 485 990 520 1185 540 1212 590 1100 598 900 592 620 562 400 525z" fill="#0a165a" />
      <path d="M395 522L620 560 900 592 1020 597 1212 588 1210 600 1080 614 1000 617 850 612 620 592 450 556z" fill="#b3cbe3" />
      <path d="M628 592L975 618V645H628z" fill="#85858b" />
      <path d="M628 645L665 597 640 592H628z" fill="#a9a9ad" />
      {Array.from({ length: 9 }, (_, i) => 665 + i * 38).map((x) => (
        <path key={x} d={`M${x} 600v45`} stroke="#55555a" strokeWidth="2" />
      ))}

      {/* glass tower */}
      <path d="M585 12H1038L1027 118 595 76z" fill="#98acc5" />
      <path d="M595 76L1027 118 985 565 628 533 612 330z" fill="#737378" fillOpacity=".93" />
      <path d="M597 80L790 155 845 160 1020 175 1027 118z" fill="#5d5d62" />
      <path d="M597 80L640 100 790 152 602 137z" fill="#49494e" />
      <path d="M605 145L790 158 850 185 845 355 612 330z" fill="#727f93" fillOpacity=".5" />
      <path d="M612 330L800 348 640 440 620 436z" fill="#4f5876" fillOpacity=".6" />
      <path d="M400 520L470 482 625 490V552L500 540z" fill="#5d6a8e" />
      {Array.from({ length: 10 }, (_, i) => i).map((i) => (
        <path
          key={i}
          d={`M${642 + i * 42} ${82 + i * 4}L${660 + i * 36} ${537 + i * 3}`}
          stroke="#3a3a40"
          strokeOpacity=".6"
          strokeWidth="2"
        />
      ))}
      {Array.from({ length: 20 }, (_, i) => i).map((i) => (
        <path
          key={i}
          d={`M${612 + i * 20} ${210 + i * 2}L${618 + i * 19} ${320 + i * 2}`}
          stroke="#9aa0aa"
          strokeOpacity=".4"
          strokeWidth="1"
        />
      ))}
      <path d="M838 183L958 195 955 290 905 326 830 318zM825 345L915 355 945 360 895 418 830 412zM822 456L928 466 910 512 820 502zM965 470h22v40h-22z" fill="#cbcbd0" />
      <path d="M958 205h16v60h-16z" fill="#b9b9be" />
      <path d="M792 205v110M828 230v90M840 185v132M880 188v136M922 192v110M832 282L955 292M840 235L955 245M868 350v64M870 462v44" stroke="#85858d" strokeWidth="2" />
      <path d="M700 190L820 200V232L700 222zM760 370h40v34h-40zM745 455h34v40h-34z" fill="none" stroke="#a59a9a" strokeDasharray="9 5" strokeWidth="2" />
      <path d="M640 180h120M650 242L800 258M780 398h150M850 390h60" stroke="#b8a8a0" strokeDasharray="5 9" strokeWidth="2" />
      <path d="M620 388L685 394 682 490 628 485z" fill="#c58a94" fillOpacity=".3" />
      <path d="M596 76L1027 118M600 136L1020 176M603 208L1012 245M612 326L1002 358" stroke="#a4a8b0" strokeWidth="3" />
      <path d="M596 77L1027 119" stroke="#fff" strokeDasharray="14 6" strokeWidth="4" />
      <path d="M620 435L990 468M840 156L962 168" stroke="#f4f4f4" strokeWidth="4" />
      <path d="M790 150L792 540M690 90v430" stroke="#38383e" strokeOpacity=".5" strokeWidth="3" />
      <path d="M593 408h35l7 28-10 40-32-2z" fill="#6c4ff0" />
    </svg>
  );
}

function View3D() {
  return (
    <section className="relative min-w-0 flex-1 bg-black">
      <Building />
      <p className="absolute bottom-[30px] left-[30px] h-6 border border-[#888]/40 bg-[#777]/40 px-1 font-['DejaVu_Sans',sans-serif] text-[12px] leading-6 whitespace-pre text-white">
        X: 40.753 m  Y: 18.998 m  Z: 21.540 m
      </p>
      <nav className="absolute top-0.5 right-0.5 h-[172px] w-8 rounded border border-[#3c3c3c] bg-[#2d2d2d]">
        <svg viewBox="0 0 32 172" className="h-full w-full">
          <path d="M23 3l4 4M27 3l-4 4" stroke="#aaa" />
          <path d="M6 23l10-4 10 4v12l-10 5-10-5z" fill="#777" />
          <path d="M6 23l10-4 10 4-10 4z" fill="#9a9a9a" />
          <path d="M16 27v13M6 23l10 4 10-4M9 30l4 1.500M19 32l4-2M13 23h6" stroke="#444" fill="none" />
          <path d="M16 47h10v10a10 10 0 1 1-10-10z" fill="#8a8a8a" />
          <circle cx="16" cy="57" r="6.500" fill="none" stroke="#3a3a3a" strokeWidth="2" />
          <circle cx="16" cy="57" r="4" fill="#999" />
          <path d="M13 77h6l-3 3zM13 147h6l-3 3zM13 162h6l-3 3zM13 166h6l-3 3z" fill="#484848" />
          <path
            d="M5 100l2-1 5 5-3-11 2-1 4 9V90h2l1 10 3-9 2 1-1 10 4-4 1.500 1.500-5 7c-1 3-3 4-6 4s-5-2-6-4z"
            fill="#8c8c8c"
          />
          <path d="M4 118h16v16H4z" fill="none" stroke="#3c3c3c" />
          <circle cx="20" cy="132" r="4" fill="#8c8c8c" />
          <path d="M23 135l4 4" stroke="#555" strokeWidth="2" />
        </svg>
      </nav>
    </section>
  );
}

/* ---------- quantification workbook ---------- */

function ToolButton({
  label,
  text,
  icon,
  width,
  caret,
  muted,
  join: side = "rounded-[3px]",
}: {
  label: string;
  text?: boolean;
  icon: ReactNode;
  width: string;
  caret?: boolean;
  muted?: boolean;
  join?: string;
}) {
  return (
    <button
      aria-label={label}
      className={`flex h-[26px] shrink-0 items-center justify-center border text-[11px] whitespace-nowrap ${width} ${side} ${
        muted
          ? "border-[#adadad] bg-[#f1f1f1] text-[#838383]"
          : "border-[#6e6e6e] bg-gradient-to-b from-[#f6f6f6] to-[#e4e4e4] text-black"
      }`}
    >
      {icon}
      {text && <span className="pl-0.5">{label}</span>}
      {caret && <Caret className="ml-0.5" />}
    </button>
  );
}

function TakeoffIcon({ ball }: { ball: string }) {
  return (
    <Icon>
      <Cube x={0.5} y={0.5} s={13} c="#e6f2df" />
      <circle cx="12" cy="11.500" r="3.500" fill={ball} stroke="#5a86ad" />
      <path d="M3.500 6.500v4H11M9 8l3 2.500L9 13" stroke="#111" strokeWidth="1.200" />
    </Icon>
  );
}

const G = "#9a9a9a";

function Nodes({ pts }: { pts: Pt[] }) {
  return (
    <>
      {pts.map(([x, y]) => (
        <rect key={`${x}-${y}`} x={x - 1.5} y={y - 1.5} width="3" height="3" fill={G} stroke="none" />
      ))}
    </>
  );
}

const corners: Pt[] = [[2, 2], [14, 2], [2, 14], [14, 14]];
const trapezoid: Pt[] = [[3, 3], [11, 3], [2, 13], [14, 13]];

function Toolbars() {
  return (
    <div className="flex flex-col gap-1">
      <div className="flex items-center">
        <ToolButton
          label="Show or hide"
          width="w-10"
          caret
          icon={
            <Icon>
              <path d="M0 6c4-6 12-6 16 0-4 6-12 6-16 0z" fill="#fff" stroke="#333" />
              <circle cx="8" cy="5.500" r="3.500" fill="#2f9be6" stroke="#1a5f96" />
              <circle cx="8" cy="5.500" r="1.500" fill="#000" stroke="none" />
              <path d="M8 12.500h8M14 10.500l2 2M16 14.500H8l2 1.500" stroke="#111" />
            </Icon>
          }
        />
        <ToolButton
          label="Workbook"
          width="ml-4 w-10"
          caret
          icon={
            <Icon>
              <path d="M1.500.500h13v15h-13z" fill="#d6dce6" stroke="#555" />
              <path d="M4 3h6" stroke="#fff" strokeWidth="3" />
              <path d="M2 13.500h12" stroke="#777" />
            </Icon>
          }
        />
        <ToolButton label="Model Takeoff" text width="ml-4 w-[109px]" caret join="rounded-l-[3px]" icon={<TakeoffIcon ball="#bfe3fa" />} />
        <ToolButton label="Virtual Takeoff" text width="-ml-px w-28" caret join="rounded-r-[3px]" icon={<TakeoffIcon ball="#b0b4ba" />} />
        <ToolButton
          label="Snapshot"
          width="w-8"
          muted
          icon={
            <Icon>
              <g stroke="#b5b5b5">
                <path d="M.5 3.500h3v-2h7v2h5v10H.5zM3.500 3.500v10" />
                <circle cx="9" cy="7.500" r="3" />
                <path d="M8 12c2 3 6 2 7-1M15 8v3h-3" />
              </g>
            </Icon>
          }
        />
        <ToolButton
          label="Select"
          text
          width="ml-4 w-[63px]"
          muted
          icon={
            <Icon>
              <g stroke="#b0b0b0">
                <path d="M.5 3.500l3-3h9v9l-3 3h-9z" fill="#cfcfcf" />
                <path d="M9.500 4v9l2-2 1.500 3.500 1.500-.7L13 10.500h2.500z" fill="#fff" />
              </g>
            </Icon>
          }
        />
        <ToolButton
          label="Hide Takeoff"
          text
          width="ml-1 w-[94px]"
          join="rounded-l-[3px]"
          icon={
            <Icon>
              <circle cx="6" cy="6" r="5.500" fill="#a9adb3" stroke="#666" />
              <circle cx="4.500" cy="4" r="2" fill="#e6e6e6" stroke="none" />
              <Bulb x={12.500} y={8.500} c="#e2f2ff" o="#6aa0cc" />
            </Icon>
          }
        />
        <ToolButton
          label="Show Takeoff"
          text
          width="-ml-px w-[100px]"
          join="rounded-r-[3px]"
          icon={
            <Icon>
              <circle cx="6" cy="6" r="5.500" fill="#bfe6fb" stroke="#3a94cc" />
              <circle cx="4.500" cy="4" r="2" fill="#fff" stroke="none" />
              <Bulb x={12.500} y={8.500} />
            </Icon>
          }
        />
        <ToolButton
          label="Change analysis"
          width="ml-px w-[39px]"
          caret
          icon={
            <Icon>
              <path d="M.5.500h3v10h-3zM.5 12.500h8M5 .500h10.500v8" fill="#fff" stroke="#555" />
              <path d="M6 3h2v2H6zM11 3h2v2h-2z" fill="#4a86c5" stroke="#4a86c5" />
              <path d="M6 8h2v2H6z" fill="#e2421a" stroke="#e2421a" />
              <path d="M10.500 11H15v3M12.500 8.500L10 11l2.500 2.500" stroke="#1a7fd0" strokeWidth="1.500" />
            </Icon>
          }
        />
        <label
          htmlFor="formula"
          className="ml-[22px] w-5 font-['Liberation_Serif',serif] text-[20px] leading-6 whitespace-nowrap text-[#222] italic"
        >
          f<sub className="text-[16px]">x</sub>
        </label>
        <input
          id="formula"
          type="text"
          className="h-6 min-w-0 flex-1 border border-r-0 border-[#e2e6ec] border-t-[#aaa] bg-[#f3f3f3]"
        />
      </div>

      <div className="flex items-center">
        <ToolButton label="Pick" width="w-8" muted icon={<Icon><path d="M4.500 1v13l3.500-4 6-.500z" fill={G} stroke={G} /></Icon>} />
        <ToolButton
          label="Polyline"
          width="ml-[15px] w-8"
          muted
          join="rounded-l-[3px]"
          icon={<Icon><path d="M12 3H3v10h11" stroke={G} /><Nodes pts={[[3, 3], [12, 3], [3, 13], [14, 13]]} /></Icon>}
        />
        <ToolButton label="Rectangle polyline" width="-ml-px w-8" muted join="" icon={<Icon><path d="M2 2h12v12H2z" stroke={G} /><Nodes pts={corners} /></Icon>} />
        <ToolButton
          label="Quick line"
          width="-ml-px w-8"
          muted
          join="rounded-r-[3px]"
          icon={<Icon><path d="M2 3h12M9 6l-3 4h2l-1 4 4-5H9z" stroke={G} /><Nodes pts={[[2, 3], [14, 3]]} /></Icon>}
        />
        <ToolButton label="Area" width="ml-[15px] w-8" muted join="rounded-l-[3px]" icon={<Icon><path d="M3 3h8l3 10H2z" fill="#ddd" stroke={G} /><Nodes pts={trapezoid} /></Icon>} />
        <ToolButton label="Rectangle area" width="-ml-px w-8" muted join="" icon={<Icon><path d="M2 2h12v12H2z" fill="#ddd" stroke={G} /><Nodes pts={corners} /></Icon>} />
        <ToolButton label="Backout" width="-ml-px w-8" muted join="" icon={<Icon><path d="M3 3h8l3 10H2z" strokeDasharray="2 1" stroke={G} /><Nodes pts={trapezoid} /></Icon>} />
        <ToolButton label="Rectangle backout" width="-ml-px w-8" muted join="rounded-r-[3px]" icon={<Icon><path d="M2 2h12v12H2z" strokeDasharray="2 1" stroke={G} /><Nodes pts={corners} /></Icon>} />
        <ToolButton
          label="Bucket fill"
          width="ml-[15px] w-8"
          muted
          icon={<Icon><path d="M8 4.500l6.500 5L9 15 3 9.500zM8 .500v8M4 5c-3 1-4 4-3 8l2-5" stroke={G} strokeWidth="1.300" /></Icon>}
        />
        <ToolButton label="Add vertex" width="ml-[15px] w-8" muted join="rounded-l-[3px]" icon={<Icon><path d="M1 8.500h6M4 5.500v6" stroke={G} strokeWidth="1.500" /><path d="M9 6h5v5H9z" fill={G} stroke="none" /></Icon>} />
        <ToolButton label="Erase" width="-ml-px w-8" muted join="rounded-r-[3px]" icon={<Icon><path d="M1 10l6-6h8v3l-6 6H1zM1 10h8l6-6M9 10v3" stroke={G} strokeWidth="1.300" /></Icon>} />
        <ToolButton
          label="Count"
          width="ml-[15px] w-8"
          muted
          icon={<Icon><circle cx="8" cy="8" r="7.500" stroke={G} /><path d="M7 4L6 12M10.500 4l-1 8M4 6.500h8.500M3.500 9.500H12" stroke="#777" /></Icon>}
        />
        <ToolButton
          label="Filter Markup"
          text
          width="ml-[15px] w-[88px]"
          muted
          icon={<Icon><path d="M2 2h10v10H2z" stroke={G} fill="#ddd" /><Nodes pts={[[2, 2], [12, 2], [2, 12]]} /><Bulb x={12.500} y={8.500} c="#eee" o="#aaa" /></Icon>}
        />
        <ToolButton
          label="Clean markup"
          width="ml-1 w-[26px]"
          muted
          icon={
            <Icon>
              <path d="M0 5.500h12M0 10.500h8M5.500 0v15M10.500 0v6" stroke="#666" />
              <path d="M8.500 14.500l1-4h4l1.500 4zM11.500 6v4" stroke="#666" fill="#ccc" />
              <circle cx="5.500" cy="2" r="1.500" fill="#f1f1f1" stroke="#666" />
              <circle cx="2" cy="10.500" r="1.500" fill="#f1f1f1" stroke="#666" />
            </Icon>
          }
        />
      </div>
    </div>
  );
}

// connector lines are drawn in a 22px tall gutter, x measured from the left of the table
const items = [
  { name: "Exterior Enclosure", wbs: "B.20", level: 1, box: "-", d: "M18.500 0v22M24 11.500h5.500V22" },
  { name: "Exterior Walls", wbs: "B.20.10", level: 2, box: "+", d: "M18.500 0v22M29.500 0v22M35 11.500h6" },
  { name: "Exterior Windows", wbs: "B.20.20", level: 2, box: "+", d: "M18.500 0v22M29.500 0v22M35 11.500h6" },
  { name: "Exterior Doors", wbs: "B.20.30", level: 2, box: "", d: "M18.500 0v22M29.500 0v11.500H41" },
  { name: "Roofing", wbs: "B.30", level: 1, box: "-", d: "M18.500 0v6M24 11.500h5.500V22" },
  { name: "Roof Coverings", wbs: "B.30.10", level: 2, box: "", d: "M29.500 0v22M29.500 11.500H41" },
  { name: "Roof Openings", wbs: "B.30.20", level: 2, box: "", d: "M29.500 0v11.500H41" },
  { name: "Interiors", wbs: "C", level: 0, box: "-", d: "M7.500 0v6M13 11.500h5.500V22" },
  { name: "Interior Construction", wbs: "C.10", level: 1, box: "-", d: "M18.500 0v22M24 11.500h5.500V22" },
];

const gutters = ["w-[21px]", "w-8", "w-[43px]"];
const boxes = [2.5, 13.5, 24.5];

function ItemsTable() {
  return (
    <div className="flex h-[216px] w-[471px] shrink-0 border border-[#7f9cc4] bg-white">
      <div className="min-w-0 flex-1 overflow-hidden pr-0.5">
        <table className="w-full table-fixed border-collapse font-['Roboto',sans-serif] text-[12px]">
          <thead>
            <tr className="h-[26px] bg-gradient-to-b from-[#f3f8fe] to-[#ddeaf8] text-[#243a5e]">
              <th className="font-normal">Items</th>
              <th className="w-[113px] border-l border-[#d4e2f2] font-normal">WBS</th>
            </tr>
          </thead>
          <tbody>
            {items.map((r) => {
              const on = r.name === "Roofing";
              const w = [21, 32, 43][r.level];
              return (
                <tr key={r.name} className="h-[22px]">
                  <td
                    className={`h-[22px] p-0 leading-5 ${
                      on
                        ? "bg-[#9ab3d5] text-white outline-2 -outline-offset-2 outline-[#264a75]"
                        : "border-b border-[#f3f3f3] text-[#1a1a1a]"
                    }`}
                  >
                    <div className="flex h-[21px] items-center">
                      <svg viewBox={`0 0 ${w} 22`} className={`h-[22px] shrink-0 ${gutters[r.level]}`} fill="none" stroke="#333">
                        <path d={r.d} />
                        {r.box && (
                          <>
                            <rect x={boxes[r.level]} y="6.500" width="10" height="10" fill={on ? "#9ab3d5" : "#fff"} />
                            <path
                              d={`M${boxes[r.level] + 2.5} 11.500h5${r.box === "+" ? "m-2.500-2.500v5" : ""}`}
                              stroke="#000"
                            />
                          </>
                        )}
                      </svg>
                      <PagesIcon />
                      <span className="pl-[3px]">{r.name}</span>
                    </div>
                  </td>
                  <td className={`border-l border-[#e2ebf6] py-0 pl-1 leading-5 ${on ? "bg-[#3399ff] text-white" : "text-[#1a1a1a]"}`}>
                    {r.wbs}
                  </td>
                </tr>
              );
            })}
          </tbody>
        </table>
      </div>
      <VScroll top="h-9" thumb="h-[50px]" />
    </div>
  );
}

function TakeoffTable() {
  return (
    <div className="flex min-w-0 flex-1 flex-col gap-2">
      <div className="overflow-hidden border border-r-0 border-[#6b6b6b] bg-white">
        <table className="w-full table-fixed border-collapse text-[11px]">
          <thead>
            <tr className="h-5 bg-gradient-to-b from-[#f0f6fd] to-[#dde9f7] text-[#2a3d5c]">
              <th className="w-[50px] font-normal">Status</th>
              <th className="w-20 border-l border-[#d4e2f2] font-normal">WBS</th>
              <th className="w-[150px] border-l border-[#d4e2f2] font-normal">Name</th>
              <th className="w-[117px] border-l-2 border-[#b4bcc8] font-normal">Comments</th>
              <th className="border-l border-[#d4e2f2] p-0 text-right font-normal">L</th>
            </tr>
          </thead>
          <tbody>
            <tr className="h-5 bg-[#6299e2] text-white">
              <td />
              <td className="p-0">B.30</td>
              <td className="py-0 pl-1">Roofing</td>
              <td className="border-l-2 border-[#22436e]" />
              <td className="border-l border-[#7aa5e0]" />
            </tr>
          </tbody>
        </table>
        <div className="h-7" />
        <HScroll left="w-[85px]" thumb="w-[304px]" end={false} />
      </div>
      <div className="flex-1 border border-r-0 border-[#6b6b6b] bg-[#efefef]" />
    </div>
  );
}

function Workbook() {
  return (
    <section className="border border-[#5c5c5c] bg-[#f0f0f0]">
      <header className="flex h-[23px] items-center justify-between border-b border-[#5c5c5c] bg-gradient-to-b from-[#b6b6b6] via-[#acacac] to-[#8e8e8e] pr-1.5 pl-[5px]">
        <h3 className="text-[11px] text-[#111]">Quantification Workbook</h3>
        <PinClose />
      </header>
      <div className="flex">
        <div className="min-w-0 flex-1">
          <div className="relative flex flex-col gap-2 pt-[9px] pb-[3px] pl-2.5">
            <Toolbars />
            <div className="flex gap-2">
              <ItemsTable />
              <TakeoffTable />
            </div>
            {/* drag highlight and the drop cursor */}
            <div className="pointer-events-none absolute top-[178px] left-0.5 h-14 w-[416px] border-2 border-[#b90504] shadow-[5px_5px_4px_rgba(0,0,0,0.3)]" />
            <svg viewBox="0 0 22 32" className="pointer-events-none absolute top-[199px] left-[210px] h-8 w-[22px]">
              <path d="M1 1v15l3.500-3 2.500 6 2.500-1-2.500-6h4.500z" fill="#fff" stroke="#000" />
              <path d="M3.500 17.500h11v7h-11z" fill="none" stroke="#000" strokeDasharray="1 1" />
              <path d="M11.500 20.500h10v10h-10z" fill="#fff" stroke="#000" />
              <path d="M14 28l4-4M14.500 23h4.500v4.500" fill="none" stroke="#000" strokeWidth="1.500" />
            </svg>
          </div>
          <HScroll left="w-0.5" thumb="w-[598px]" />
        </div>
        <div className="mb-5 flex">
          <VScroll top="h-1.5" thumb="h-[250px]" />
        </div>
      </div>
    </section>
  );
}

/* ---------- status bar ---------- */

function StatusBar() {
  return (
    <footer className="flex h-[27px] items-center justify-end pr-2 text-[11px] text-[#111]">
      <div className="flex items-center gap-1">
        <button aria-label="First sheet">
          <svg viewBox="0 0 18 16" className="h-4 w-[18px]" fill="#aaa" stroke="#8b8b8b">
            <path d="M9.500 1v14l-8-7zM12.500 1h4v14h-4z" />
          </svg>
        </button>
        <button aria-label="Previous sheet">
          <svg viewBox="0 0 12 16" className="h-4 w-3" fill="#aaa" stroke="#8b8b8b">
            <path d="M10.500 1v14l-8-7z" />
          </svg>
        </button>
      </div>
      <span className="mx-4 pb-1 text-[11px]">1 of 1</span>
      <div className="flex items-center gap-1">
        <button aria-label="Next sheet">
          <svg viewBox="0 0 12 16" className="h-4 w-3" fill="#aaa" stroke="#8b8b8b">
            <path d="M1.500 1v14l8-7z" />
          </svg>
        </button>
        <button aria-label="Last sheet">
          <svg viewBox="0 0 18 16" className="h-4 w-[18px]" fill="#aaa" stroke="#8b8b8b">
            <path d="M8.500 1v14l8-7zM1.500 1h4v14h-4z" />
          </svg>
        </button>
      </div>
      <button aria-label="Sheet browser" className="ml-0.5">
        <Icon>
          <path d="M.5 1.500h15v14H.5z" fill="#f4f7fa" />
          <path d="M0 2h16" strokeWidth="3" />
          <path d="M2.500 6.500h2v2h-2zM2.500 11h2v2h-2zM7 7.500h7M7 12h7" stroke="#5a7690" />
        </Icon>
      </button>
      <span className="ml-[9px] h-[18px] w-0.5 border-l border-[#555] bg-white" />
      <div className="ml-[13px] flex gap-[5px]">
        <span className="flex flex-col">
          <svg viewBox="0 0 30 10" className="h-2.5 w-[30px]" stroke="#000">
            <path d="M1.500 2.500h10v4h-10z" fill="#ddd" />
            <path d="M1.500 2.500h2v4h-2z" fill="#f00" stroke="#c00" />
            <path d="M11.500 2.500l4 2-4 2z" fill="#ff0" />
          </svg>
          <span className="h-[7px] w-[30px] border border-black bg-[#0000ff]" />
        </span>
        <span className="flex flex-col">
          <svg viewBox="0 0 30 10" className="h-2.5 w-[30px]" fill="#ccc" stroke="#000">
            <path d="M1.500 2.500v5l2 2h4l2-2v-5" />
            <ellipse cx="5.500" cy="2.500" rx="4" ry="2" />
          </svg>
          <span className="h-[7px] w-[30px] border border-black bg-[#d4d4d4] pr-[3px]">
            <span className="block h-full bg-[#0000ff]" />
          </span>
        </span>
        <span className="flex flex-col">
          <svg viewBox="0 0 30 10" className="h-2.5 w-[30px]" fill="#ccc" stroke="#000">
            <path d="M4 2.500h9M8.500 3v4M6 4L3.500 7M11 4l2.500 3" fill="none" />
            <path d="M1 .500h3v3H1zM7 .500h3v3H7zM13 .500h3v3h-3zM2 6.500h2v2H2zM7.500 7.500h2v2h-2zM13 6.500h2v2h-2z" />
          </svg>
          <span className="h-[7px] w-[30px] border border-black bg-[#d4d4d4]" />
        </span>
      </div>
      <span className="ml-[7px] text-[10px]">932 MB</span>
    </footer>
  );
}

export default function App() {
  return (
    <main className="min-h-screen bg-white font-['DejaVu_Sans_Condensed','DejaVu_Sans',sans-serif]">
      <div className="relative w-full max-w-[980px] border-r-[3px] border-b-[3px] border-l-4 border-[#686868] bg-[#a0a0a0]">
        <TitleBar />
        <div className="h-px bg-[#333]" />
        <TabBar />
        <button
          aria-label="Application menu"
          className="absolute top-[3px] left-0 flex h-[41px] w-[41px] items-center gap-1 border border-[#222] bg-gradient-to-b from-[#8e8e8e] to-[#4c4c4c] pl-1.5 text-[#222]"
        >
          <svg viewBox="0 0 20 26" className="mb-2 h-[26px] w-5">
            <path d="M0 2l7-2 2 4v22l-9-1z" fill="#0a6a34" />
            <path d="M0 2l7-2 7 14-2 12L7 14z" fill="#15954a" />
            <path d="M13 1l6-1v25l-5 1-7-12 6 3z" fill="#0b5c2e" />
            <path d="M13 1l6-1-6 12z" fill="#2fb866" />
            <path d="M0 25l9-5v6z" fill="#1fae5a" />
          </svg>
          <Caret className="-ml-0.5" />
        </button>
        <Ribbon />
        <div className="flex flex-col gap-1 pt-[3px] pr-0.5 pl-[3px]">
          <div className="flex gap-1">
            <SelectionTree />
            <View3D />
          </div>
          <Workbook />
        </div>
        <StatusBar />
      </div>
    </main>
  );
}
